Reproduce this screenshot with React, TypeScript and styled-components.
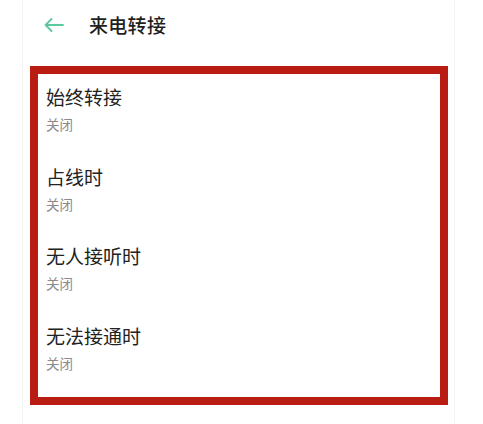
import styled, { createGlobalStyle } from 'styled-components';

const GlobalStyle = createGlobalStyle`
    html, body {
        margin: 0;
        padding: 0;
        background: #ffffff;
        font-family: "Noto Sans CJK SC", "Noto Sans", sans-serif;
    }
`;

const Page = styled.div`
    width: 483px;
    height: 424px;
    overflow: hidden;
    background: #ffffff;
`;

const Panel = styled.div`
    margin: 0 28px 0 22px;
    height: 100%;
    border-left: 1px solid #f3f3f3;
    border-right: 1px solid #f3f3f3;
    box-sizing: border-box;
`;

const Header = styled.header`
    display: flex;
    align-items: center;
    height: 50px;
    padding-left: 21px;
    gap: 25px;

    h1 {
        margin: 0;
        font-size: 19px;
        line-height: 26px;
        font-weight: 500;
        color: #1f1f1f;
        letter-spacing: 0.3px;
    }
`;

const BackButton = styled.button`
    display: flex;
    align-items: center;
    padding: 0;
    border: 0;
    background: none;
    width: 20px;
    height: 20px;
`;

const Highlight = styled.div`
    margin: 16px 6px 0 7px;
    border: 8px solid #b91c12;
    padding: 0 8px 5px;
`;

const Item = styled.div`
    display: flex;
    flex-direction: column;
    gap: 5px;
    padding: 10px 0 20.5px;
`;

const Title = styled.div`
    font-size: 19px;
    line-height: 26px;
    color: #222222;
`;

const Status = styled.div`
    font-size: 13.5px;
    line-height: 18px;
    color: #8a8a8a;
`;

const items = ['始终转接', '占线时', '无人接听时', '无法接通时'];

export default function App() {
    return (
        <Page>
            <GlobalStyle />
            <Panel>
                <Header>
                    <BackButton aria-label="返回">
                        <svg width="20" height="14" viewBox="0 0 20 14" fill="none">
                            <path
                                d="M19 7H1.5M7.5 1L1.5 7l6 6"
                                stroke="#5cc89e"
                                strokeWidth="1.8"
                                strokeLinecap="round"
                                strokeLinejoin="round"
                            />
                        </svg>
                    </BackButton>
                    <h1>来电转接</h1>
                </Header>

                <Highlight>
                    {items.map((name) => (
                        <Item key={name}>
                            <Title>{name}</Title>
                            <Status>关闭</Status>
                        </Item>
                    ))}
                </Highlight>
            </Panel>
        </Page>
    );
}
